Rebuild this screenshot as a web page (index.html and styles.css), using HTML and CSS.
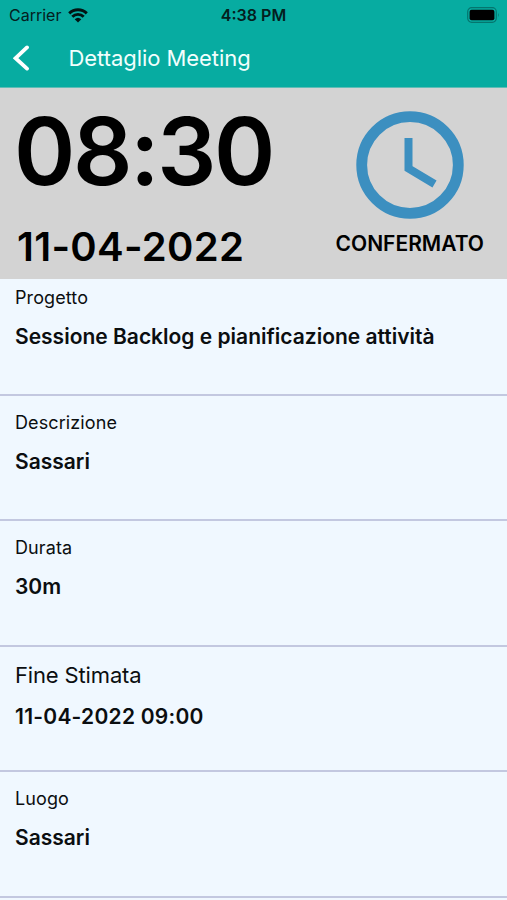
FILE: index.html
```html
<!DOCTYPE html>
<html lang="it">
<head>
    <meta charset="UTF-8">
    <meta name="viewport" content="width=device-width, initial-scale=1.0">
    <title>Dettaglio Meeting</title>
    <link rel="stylesheet" href="styles.css">
</head>
<body>
    <header class="topbar">
        <div class="status">
            <div class="carrier">
                <span>Carrier</span>
                <svg class="wifi" viewBox="0 0 20 15" width="20" height="15">
                    <path d="M1.2 5.4a12.6 12.6 0 0 1 17.6 0M4.3 8.7a8.1 8.1 0 0 1 11.4 0" fill="none" stroke="#021413" stroke-width="2.9"/>
                    <path d="M10 14.5L6.7 11.3a4.8 4.8 0 0 1 6.6 0z" fill="#021413"/>
                </svg>
            </div>
            <span class="clock">4:38 PM</span>
            <svg class="battery" viewBox="0 0 33 16" width="33" height="16">
                <rect x="0.7" y="0.7" width="28.6" height="14.6" rx="4" fill="none" stroke="#05756e" stroke-width="1.2"/>
                <rect x="2.6" y="2.8" width="24.8" height="10.4" rx="2" fill="#000"/>
                <path d="M31 5.8q1.6 2.2 0 4.4z" fill="#05756e"/>
            </svg>
        </div>
        <div class="navbar">
            <svg class="back" viewBox="0 0 17 28" width="17" height="28">
                <path d="M14 3.4L2.6 14.2l11.4 10.4" fill="none" stroke="#fff" stroke-width="3.8" stroke-linecap="round"/>
            </svg>
            <h1 class="title">Dettaglio Meeting</h1>
        </div>
    </header>

    <section class="summary">
        <div class="when">
            <div class="time">08:30</div>
            <div class="date">11-04-2022</div>
        </div>
        <div class="state">
            <svg class="state-icon" viewBox="0 0 108 108" width="108" height="108">
                <circle cx="54" cy="54" r="48.3" fill="none" stroke="#3c8fc0" stroke-width="10.8"/>
                <path d="M52.5 27v30.5l26 15.5" fill="none" stroke="#3c8fc0" stroke-width="8"/>
            </svg>
            <div class="state-text">CONFERMATO</div>
        </div>
    </section>

    <main class="details">
        <div class="row first">
            <div class="label">Progetto</div>
            <div class="value">Sessione Backlog e pianificazione attività</div>
        </div>
        <div class="row">
            <div class="label">Descrizione</div>
            <div class="value">Sassari</div>
        </div>
        <div class="row">
            <div class="label">Durata</div>
            <div class="value">30m</div>
        </div>
        <div class="row">
            <div class="label large">Fine Stimata</div>
            <div class="value end">11-04-2022 09:00</div>
        </div>
        <div class="row">
            <div class="label">Luogo</div>
            <div class="value">Sassari</div>
        </div>
    </main>
</body>
</html>
```

FILE: styles.css
```css
* {
    box-sizing: border-box;
}
body {
    margin: 0;
    height: 900px;
    overflow: hidden;
    font-family: Inter, "Liberation Sans", sans-serif;
    background-color: #f0f8ff;
    color: #0b0e10;
}
svg {
    display: block;
}
.topbar {
    height: 88px;
    background-color: #07aca1;
    border-bottom: 1px solid #5fbdb6;
}
.status {
    display: grid;
    grid-template-columns: 1fr auto 1fr;
    align-items: center;
    height: 30px;
    padding: 0 7px 0 9px;
    font-size: 16px;
    color: #04201e;
}
.carrier {
    display: flex;
    align-items: center;
    gap: 7px;
}
.clock {
    margin-right: 2px;
    font-weight: 600;
}
.battery {
    justify-self: end;
}
.navbar {
    display: flex;
    align-items: center;
    gap: 38.5px;
    height: 55px;
    padding-left: 13px;
}
.title {
    margin: 0;
    font-size: 22px;
    font-weight: 400;
    letter-spacing: -0.06px;
    color: #f2fffd;
}
.summary {
    display: flex;
    justify-content: space-between;
    height: 190.5px;
    padding: 0 23px 0 15px;
    background-color: #d3d3d3;
    color: #000;
}
.time {
    padding-top: 7px;
    font-size: 93px;
    font-weight: 600;
    line-height: 112px;
    letter-spacing: -2.4px;
    margin-left: -1px;
}
.date {
    padding: 15px 0 0 2px;
    font-size: 40px;
    font-weight: 600;
    line-height: 50px;
    letter-spacing: 0.3px;
}
.state {
    display: flex;
    flex-direction: column;
    align-items: center;
    padding-top: 22.5px;
}
.state-text {
    margin-top: 12px;
    font-size: 21px;
    font-weight: 600;
    line-height: 26px;
}
.row {
    height: 125.4px;
    padding: 15px 15px 0;
    border-bottom: 2px solid #c3c8e0;
}
.first {
    height: 117.5px;
    padding-top: 7.5px;
}
.label {
    font-size: 18px;
    line-height: 24px;
    letter-spacing: 0.1px;
}
.large {
    margin-top: -1px;
    font-size: 22px;
    line-height: 28px;
    letter-spacing: -0.15px;
}
.value {
    margin-top: 14px;
    font-size: 21px;
    font-weight: 600;
    line-height: 26px;
}
.end {
    margin-top: 15px;
    letter-spacing: 0.25px;
}
```
